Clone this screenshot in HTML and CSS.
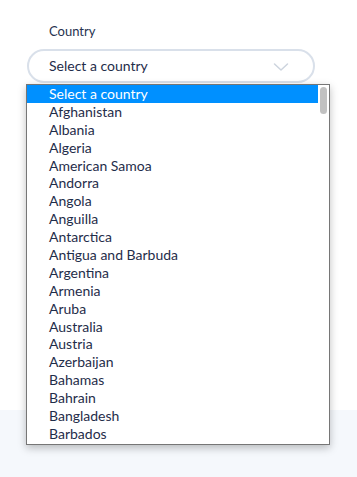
FILE: index.html
```html
<!DOCTYPE html>
<html>
<head>
<meta charset="utf-8">
<link rel="stylesheet" href="styles.css">
</head>
<body>
<div class="card">
  <div class="field">
    <label class="label">Country</label>
    <div class="select">
      <span class="select-text">Select a country</span>
      <svg class="chev" width="16" height="10" viewBox="0 0 16 10"><path d="M1.5 2 L8 8 L14.5 2" fill="none" stroke="#cdd4de" stroke-width="1.5" stroke-linecap="round" stroke-linejoin="round"/></svg>
    </div>
  </div>
</div>
<div class="footer"></div>
<div class="dropdown">
  <ul class="options">
    <li class="opt selected">Select a country</li>
    <li class="opt">Afghanistan</li>
    <li class="opt">Albania</li>
    <li class="opt">Algeria</li>
    <li class="opt">American Samoa</li>
    <li class="opt">Andorra</li>
    <li class="opt">Angola</li>
    <li class="opt">Anguilla</li>
    <li class="opt">Antarctica</li>
    <li class="opt">Antigua and Barbuda</li>
    <li class="opt">Argentina</li>
    <li class="opt">Armenia</li>
    <li class="opt">Aruba</li>
    <li class="opt">Australia</li>
    <li class="opt">Austria</li>
    <li class="opt">Azerbaijan</li>
    <li class="opt">Bahamas</li>
    <li class="opt">Bahrain</li>
    <li class="opt">Bangladesh</li>
    <li class="opt">Barbados</li>
  </ul>
  <div class="scrolltrack"><div class="thumb"></div></div>
</div>
</body>
</html>
```
FILE: styles.css
```css
* { box-sizing: border-box; }
html, body { margin: 0; padding: 0; }
body {
  width: 357px;
  height: 477px;
  background: #f5f8fc;
  font-family: Lato, "Open Sans", sans-serif;
  color: #1f2d4a;
  position: relative;
  overflow: hidden;
}
.card {
  background: #ffffff;
  height: 410px;
  padding: 23px 0 0 27px;
}
.field {
  display: flex;
  flex-direction: column;
  width: 288px;
}
.label {
  font-size: 13px;
  line-height: 16px;
  padding-left: 22px;
  margin-bottom: 10px;
  color: #26324f;
}
.select {
  height: 34px;
  border: 2px solid #d9e0ea;
  border-radius: 17px;
  display: flex;
  align-items: center;
  justify-content: space-between;
  padding: 0 24px 0 20px;
}
.select-text {
  font-size: 14px;
  color: #1f2d4a;
  margin-top: -1px;
}
.chev { display: block; margin-top: 1px; }
.dropdown {
  position: absolute;
  left: 26px;
  top: 84px;
  width: 304px;
  height: 361px;
  background: #fff;
  border: 1px solid #767676;
  box-shadow: 0 3px 8px rgba(0, 0, 0, 0.25);
  display: flex;
}
.options {
  list-style: none;
  margin: 0;
  padding: 0;
  flex: 1;
}
.opt {
  height: 17.9px;
  line-height: 17.9px;
  font-size: 14px;
  padding-left: 22px;
  color: #1f2d4a;
  white-space: nowrap;
}
.opt.selected {
  background: #0090ff;
  color: #ffffff;
}
.scrolltrack {
  width: 11px;
  padding: 2px 0 0 2px;
}
.thumb {
  width: 7px;
  height: 27px;
  background: #c1c1c1;
  border-radius: 4px;
}
```
